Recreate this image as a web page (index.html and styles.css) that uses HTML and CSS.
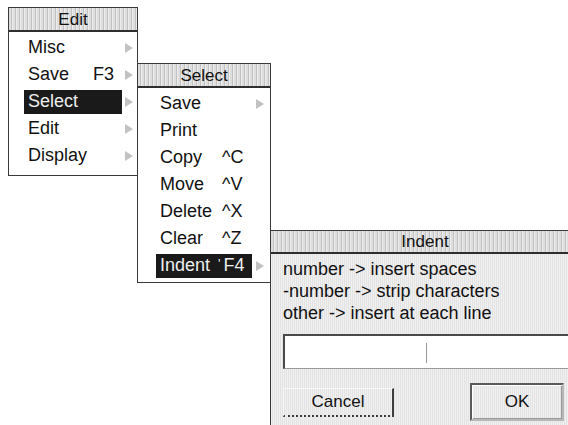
FILE: index.html
```html
<!DOCTYPE html>
<html lang="en">
<head>
    <meta charset="UTF-8">
    <title>Edit menu - Indent</title>
    <link rel="stylesheet" href="styles.css">
</head>
<body>
    <div class="desktop">

        <!-- Edit menu -->
        <div class="menu edit-menu">
            <div class="title">Edit</div>
            <div class="items">
                <div class="item"><div class="entry"><span class="label">Misc</span></div><span class="arrow"></span></div>
                <div class="item"><div class="entry"><span class="label">Save</span><span class="key">F3</span></div><span class="arrow"></span></div>
                <div class="item"><div class="entry selected"><span class="label">Select</span></div><span class="arrow"></span></div>
                <div class="item"><div class="entry"><span class="label">Edit</span></div><span class="arrow"></span></div>
                <div class="item"><div class="entry"><span class="label">Display</span></div><span class="arrow"></span></div>
            </div>
        </div>

        <!-- Select submenu -->
        <div class="menu select-menu">
            <div class="title">Select</div>
            <div class="items">
                <div class="item"><div class="entry"><span class="label">Save</span></div><span class="arrow"></span></div>
                <div class="item"><div class="entry"><span class="label">Print</span></div><span class="arrow none"></span></div>
                <div class="item"><div class="entry"><span class="label">Copy</span><span class="key">^C</span></div><span class="arrow none"></span></div>
                <div class="item"><div class="entry"><span class="label">Move</span><span class="key">^V</span></div><span class="arrow none"></span></div>
                <div class="item"><div class="entry"><span class="label">Delete</span><span class="key">^X</span></div><span class="arrow none"></span></div>
                <div class="item"><div class="entry"><span class="label">Clear</span><span class="key">^Z</span></div><span class="arrow none"></span></div>
                <div class="item"><div class="entry selected"><span class="label">Indent</span><span class="key"><span class="shift">'</span>F4</span></div><span class="arrow"></span></div>
            </div>
        </div>

        <!-- Indent dialogue box -->
        <div class="dialog">
            <div class="title">Indent</div>
            <div class="dialog-body">
                <p class="help">number -&gt; insert spaces</p>
                <p class="help">-number -&gt; strip characters</p>
                <p class="help">other -&gt; insert at each line</p>
                <div class="field"><span class="caret"></span></div>
                <div class="buttons">
                    <button class="btn">Cancel</button>
                    <button class="btn default">OK</button>
                </div>
            </div>
        </div>

    </div>
</body>
</html>
```

FILE: styles.css
```css
body {
    margin: 0;
    background: #fff;
    font-family: 'Liberation Sans', Arial, sans-serif;
    color: #111;
    overflow: hidden;
}

.desktop {
    position: relative;
    width: 568px;
    height: 425px;
    overflow: hidden;
}

/* windows sit on a free desktop, so they are placed by coordinates */
.menu, .dialog {
    position: absolute;
    box-sizing: border-box;
    border: 1px solid #3a3a3a;
    background: #fff;
}

.title {
    height: 22px;
    line-height: 23px;
    text-align: center;
    font-size: 17px;
    color: #111;
    border-bottom: 2px solid #2e2e2e;
    background: repeating-linear-gradient(90deg, #dedede 0 2px, #c2c2c2 2px 3px, #ececec 3px 4px);
}

.items {
    display: flex;
    flex-direction: column;
}

.item {
    display: flex;
    align-items: center;
    height: 27px;
    font-size: 18px;
}

.entry {
    display: flex;
    align-items: center;
    height: 24px;
    padding-left: 4px;
    box-sizing: border-box;
}

.entry.selected {
    background: #1a1a1a;
    color: #eee;
}

.key {
    white-space: nowrap;
}

.shift {
    font-size: 13px;
    margin-right: 3px;
    position: relative;
    top: -3px;
}

.arrow {
    width: 0;
    height: 0;
    border-top: 5px solid transparent;
    border-bottom: 5px solid transparent;
    border-left: 8px solid #c2c2c2;
}

.arrow.none {
    visibility: hidden;
}

/* Edit menu */
.edit-menu {
    left: 8px;
    top: 7px;
    width: 130px;
    height: 169px;
}

.edit-menu .items {
    padding-top: 2px;
}

.edit-menu .item {
    padding-left: 15px;
}

.edit-menu .entry {
    width: 98px;
    margin-right: 3px;
}

.edit-menu .label {
    width: 65px;
}

/* Select menu */
.select-menu {
    left: 137px;
    top: 63px;
    width: 134px;
    height: 220px;
}

.select-menu .items {
    padding-top: 2px;
}

.select-menu .item {
    padding-left: 18px;
}

.select-menu .entry {
    width: 96px;
    margin-right: 4px;
}

.select-menu .label {
    width: 62px;
}

.select-menu .entry.selected .label {
    width: 58px;
}

/* Indent dialogue */
.dialog {
    left: 270px;
    top: 230px;
    width: 310px;
    height: 210px;
    background: repeating-linear-gradient(90deg, #f0f0f0 0 1px, #e3e3e3 1px 2px);
}

.dialog .title {
    height: 21px;
    line-height: 22px;
}

.dialog-body {
    padding: 4px 0 0 12px;
}

.help {
    margin: 0;
    font-size: 18px;
    line-height: 22px;
    color: #111;
}

.field {
    position: relative;
    height: 35px;
    margin-top: 10px;
    box-sizing: border-box;
    background: #fff;
    border-top: 2px solid #4a4a4a;
    border-left: 2px solid #4a4a4a;
    border-bottom: 1px solid #9a9a9a;
}

.caret {
    position: absolute;
    left: 141px;
    top: 7px;
    width: 1px;
    height: 20px;
    background: #9a9a9a;
}

.buttons {
    display: flex;
    align-items: center;
    margin-top: 14px;
}

.btn {
    font-family: 'Liberation Sans', Arial, sans-serif;
    font-size: 17px;
    color: #111;
    background: transparent;
    box-sizing: border-box;
    width: 111px;
    height: 29px;
    border: 1px solid #f8f8f8;
    border-right: 2px solid #3e3e3e;
    border-bottom: 2px dotted #3e3e3e;
    padding: 0;
}

.btn.default {
    width: 94px;
    height: 38px;
    margin-left: 76px;
    border: 2px solid #b8b8b8;
    border-left-color: #5a5a5a;
    border-top-color: #5a5a5a;
    box-shadow: inset 1px 1px 0 #fff, inset -1px -1px 0 #9a9a9a;
}
```
